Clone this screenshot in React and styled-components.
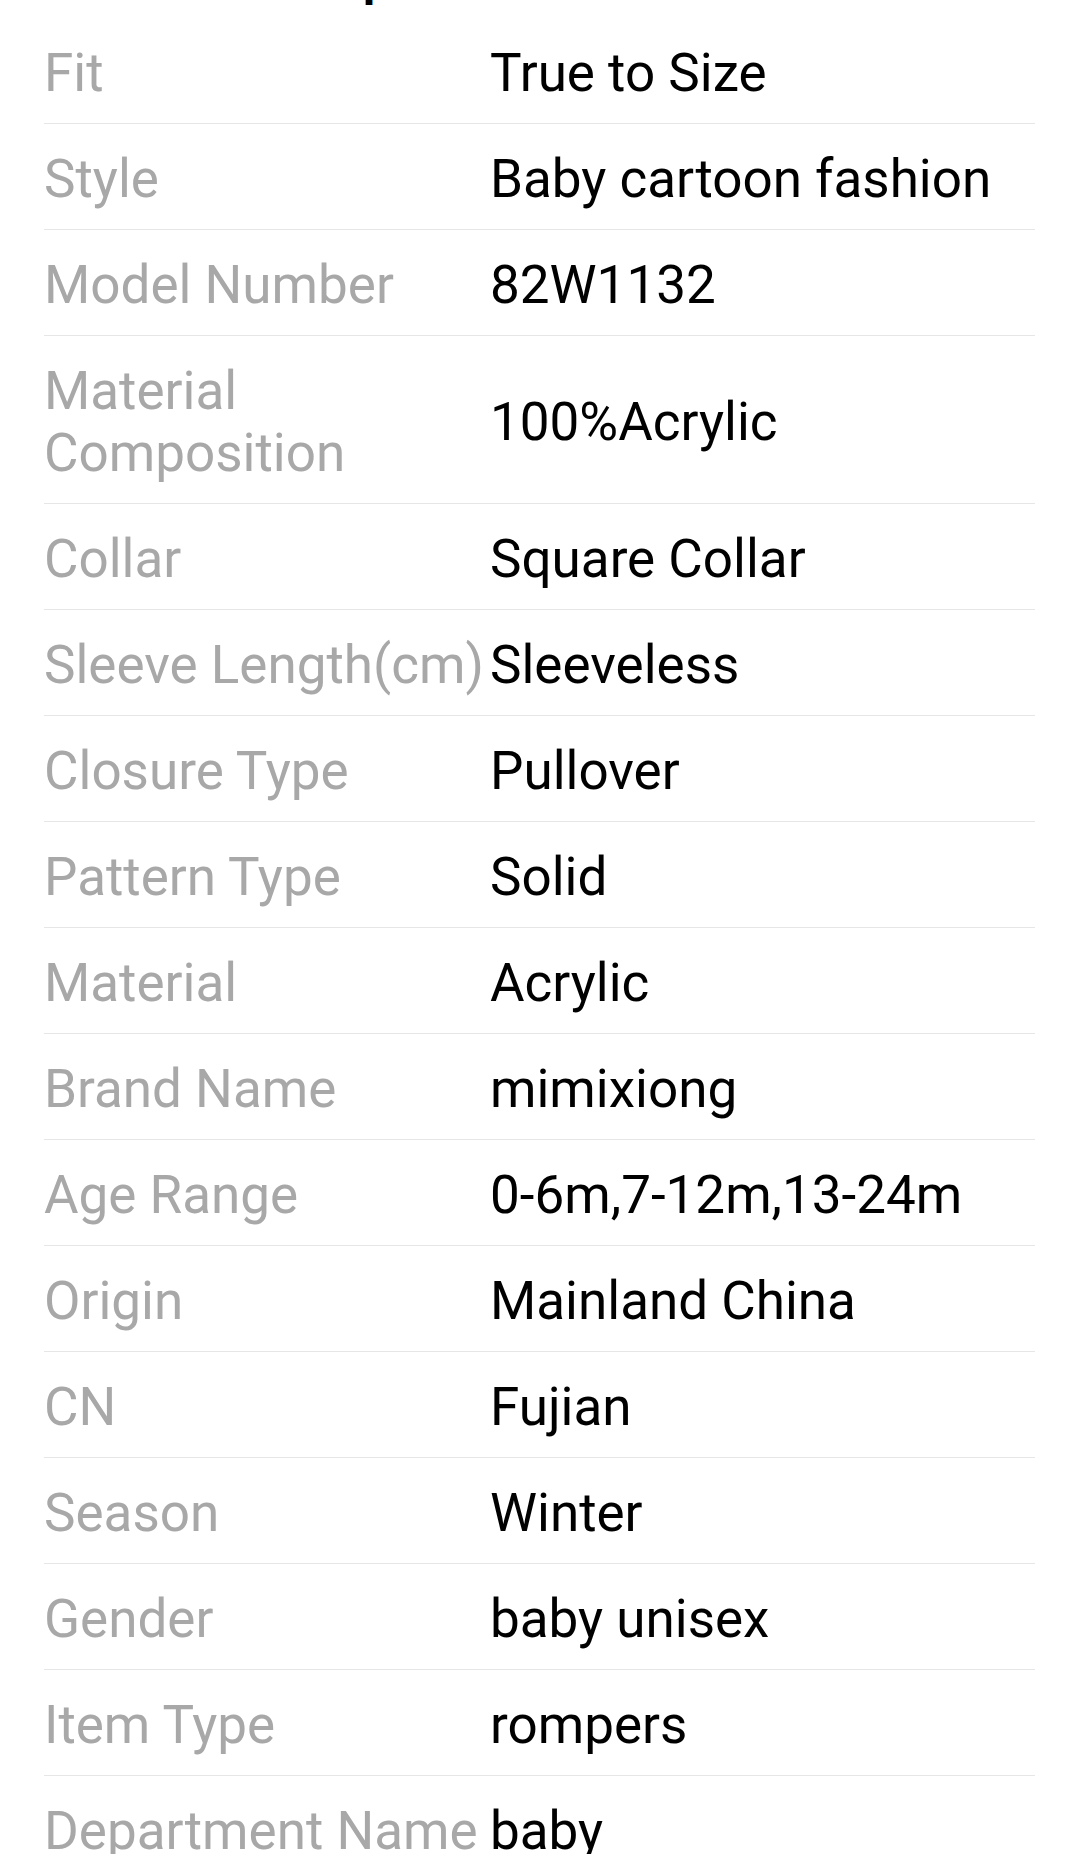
import React from 'react';
import styled, { createGlobalStyle } from 'styled-components';

const GlobalStyle = createGlobalStyle`
    html, body {
        margin: 0;
        padding: 0;
        background: #fff;
    }
    body {
        font-family: Roboto, "Noto Sans", "Liberation Sans", sans-serif;
        -webkit-font-smoothing: antialiased;
    }
`

const Container = styled.div`
    padding: 0 45px 0 44px;
    overflow: hidden;
`

// heading sits mostly above the top edge, only a descender peeks in
const Title = styled.h2`
    margin: -49px 0 0 0;
    font-size: 48px;
    line-height: 56px;
    font-weight: 700;
    color: #000;
`

const Table = styled.div`
    display: flex;
    flex-direction: column;
    margin-top: 11px;
`

const Row = styled.div`
    display: grid;
    grid-template-columns: 446px 1fr;
    align-items: center;
    padding: 24px 0 19px;
    border-bottom: 1px solid #e6e6e6;
`

const Label = styled.span`
    font-size: 53px;
    line-height: 62px;
    color: #a8a8a8;
    white-space: ${props => props.$nowrap ? "nowrap" : "normal"};
`

const Value = styled.span`
    font-size: 53px;
    line-height: 62px;
    color: #000;
`

const specs = [
    ["Fit", "True to Size"],
    ["Style", "Baby cartoon fashion"],
    ["Model Number", "82W1132"],
    ["Material Composition", "100%Acrylic"],
    ["Collar", "Square Collar"],
    ["Sleeve Length(cm)", "Sleeveless"],
    ["Closure Type", "Pullover"],
    ["Pattern Type", "Solid"],
    ["Material", "Acrylic"],
    ["Brand Name", "mimixiong"],
    ["Age Range", "0-6m,7-12m,13-24m"],
    ["Origin", "Mainland China"],
    ["CN", "Fujian"],
    ["Season", "Winter"],
    ["Gender", "baby unisex"],
    ["Item Type", "rompers"],
    ["Department Name", "baby"],
]

const App = () => {
    return (
        <Container>
            <GlobalStyle />
            <Title>Product Description</Title>
            <Table>
                {specs.map(([label, value]) => (
                    <Row key={label}>
                        <Label $nowrap={label !== "Material Composition"}>{label}</Label>
                        <Value>{value}</Value>
                    </Row>
                ))}
            </Table>
        </Container>
    )
}

export default App
